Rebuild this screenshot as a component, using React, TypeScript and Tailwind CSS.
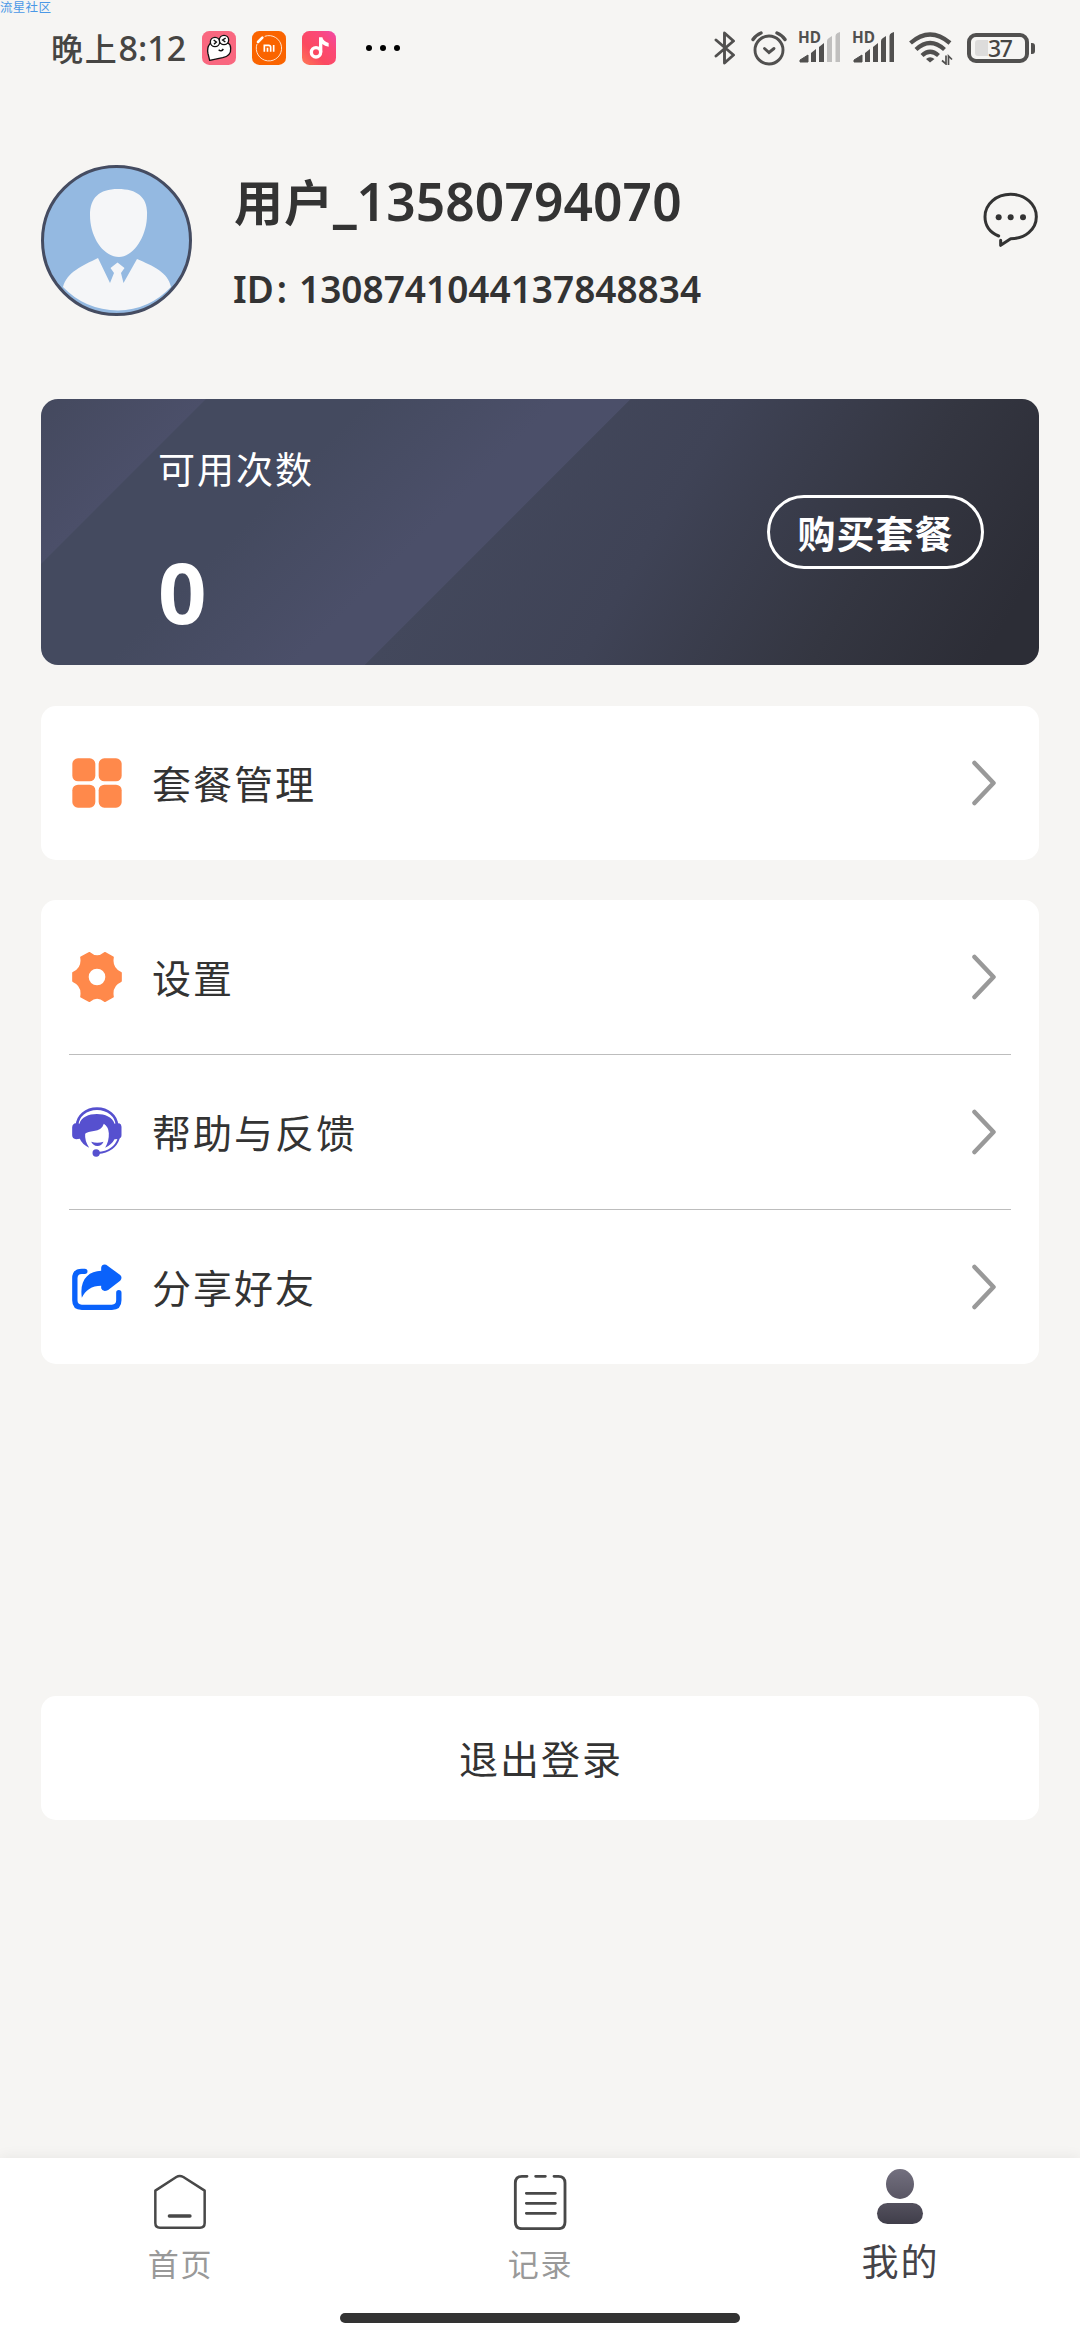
import React from 'react';

const CJK = "font-['Noto_Sans_CJK_SC','Noto_Sans',sans-serif]";
const LATIN = "font-['Noto_Sans','Noto_Sans_CJK_SC',sans-serif]";

function Signal({ dimmed }: { dimmed: boolean }) {
  const faded = dimmed ? '#c0bfbe' : '#51504f';
  return (
    <svg className="h-[34px] w-[42px] shrink-0 overflow-visible" viewBox="0 0 42 34">
      <text x="-1" y="12.4" fontSize="15.5" fontWeight="700" fill="#51504f" fontFamily="Noto Sans" textLength="23" lengthAdjust="spacingAndGlyphs">HD</text>
      <g fill="#51504f">
        <path d="M1 31 V29 L9 24 V31 Z" stroke="#51504f" strokeWidth="1" strokeLinejoin="round" />
        <path d="M12 31 V22 L17 18 V31 Z" />
        <path d="M20 31 V16 L25 12 V31 Z" />
      </g>
      <path d="M28 31 V10 Q28 8 30 7 L33 5 V31 Z" fill={faded} />
      <path d="M36.500 31 V5 Q36.500 3 38.500 2 L41 1 V31 Z" fill={faded} />
    </svg>
  );
}

function StatusBar() {
  return (
    <div className="flex h-[96px] shrink-0 items-center pl-[51px] pr-[45px] text-[#464543]">
      <div className="flex w-[151px] items-center whitespace-nowrap font-medium">
        <span className={`${CJK} pb-[2px] text-[32px] leading-[48px] tracking-[1.8px]`}>晚上</span>
        <span className={`${LATIN} text-[34px] leading-[48px]`}>8:12</span>
      </div>
      <svg className="h-[34px] w-[34px]" viewBox="0 0 102 102">
        <rect width="102" height="102" rx="22" fill="#f9677f" />
        <path d="M24 38 Q14 50 18 68 L23 88 L62 80 Q88 74 86 52 Q86 40 78 36 Z" fill="#fff" stroke="#111" strokeWidth="4" strokeLinejoin="round" />
        <circle cx="39" cy="33" r="14" fill="#fff" stroke="#111" strokeWidth="4" />
        <circle cx="66" cy="27" r="14" fill="#fff" stroke="#111" strokeWidth="4" />
        <path d="M35 27 L43 33 L36 40 M71 21 L62 27 L70 33 M50 56 Q58 64 64 54" fill="none" stroke="#111" strokeWidth="4.500" />
      </svg>
      <svg className="ml-4 h-[34px] w-[34px]" viewBox="0 0 102 102">
        <rect width="102" height="102" rx="22" fill="#fa6400" />
        <path d="M38 16 A38 38 0 1 1 15 39" fill="none" stroke="#ffe3cf" strokeWidth="3" />
        <path d="M18 33 L31 20" stroke="#fff" strokeWidth="8" strokeLinecap="round" />
        <path d="M37 62 V43 H50 Q56 43 56 49 V62 M46.500 50 V62 M65 42 V62" fill="none" stroke="#fff" strokeWidth="5" />
      </svg>
      <svg className="ml-4 h-[34px] w-[34px]" viewBox="0 0 102 102">
        <defs>
          <linearGradient id="music" x1="0" y1="1" x2="1" y2="0">
            <stop offset="0" stopColor="#ff7a55" />
            <stop offset=".35" stopColor="#fb4a60" />
            <stop offset=".7" stopColor="#fb4878" />
            <stop offset="1" stopColor="#f048a8" />
          </linearGradient>
        </defs>
        <rect width="102" height="102" rx="22" fill="url(#music)" />
        <circle cx="42" cy="64" r="14" fill="none" stroke="#fff" strokeWidth="10" />
        <path d="M51 64 V19 H61 Q64 32 80 36 V47 Q68 46 61 39 V64 Z" fill="#fff" />
      </svg>
      <div className="ml-[30px] flex gap-2">
        <span className="size-[6px] rounded-full bg-black" />
        <span className="size-[6px] rounded-full bg-black" />
        <span className="size-[6px] rounded-full bg-black" />
      </div>
      <div className="ml-auto flex items-center">
        <svg className="h-[34px] w-[22px]" viewBox="0 0 22 34" fill="none" stroke="#51504f" strokeWidth="2.900" strokeLinejoin="round" strokeLinecap="round">
          <path d="M2 9 L19.500 24 L10.500 32 V2 L19.500 10 L2 25" />
        </svg>
        <svg className="ml-[15px] h-[36px] w-[36px]" viewBox="0 0 36 36" fill="none" stroke="#51504f" strokeWidth="2.900" strokeLinecap="round">
          <circle cx="18" cy="20" r="14" />
          <path d="M13.500 18.500 L18 22.500 L23 18.500" />
          <path d="M2 9.500 Q5 5 10 3 M34 9.500 Q31 5 26 3" strokeWidth="3.400" />
        </svg>
        <div className="ml-[12px] flex gap-[12px]">
          <Signal dimmed />
          <Signal dimmed={false} />
        </div>
        <svg className="ml-[14px] h-[34px] w-[44px]" viewBox="0 0 44 34" fill="none" stroke="#51504f" strokeWidth="4.300">
          <path d="M1.500 12 Q21 -5 41 12" />
          <path d="M7 18.500 Q21 5.500 35.500 18.500" />
          <path d="M13 24.500 Q21 17 29.500 24.500" />
          <path d="M17 28 Q21 24.500 25.500 28 L21 31.500 Z" fill="#51504f" stroke="none" />
          <path d="M37 24.500 V33 L33 29.500 M39.500 34 V25 L43 28.500" strokeWidth="1.700" />
        </svg>
        <div className="ml-[14px] flex items-center gap-[2px]">
          <div className="flex h-[30px] w-[62px] items-center rounded-[9px] border-4 border-[#51504f] pl-[4px]">
            <span className="h-[16px] w-[13px] rounded-l-[3px] bg-[#dddcdb]" />
            <span className={`${LATIN} text-[23px] font-medium leading-none tracking-[-1.5px]`}>37</span>
          </div>
          <span className="h-[11px] w-[4px] rounded-r-[3px] bg-[#51504f]" />
        </div>
      </div>
    </div>
  );
}

function Avatar() {
  return (
    <svg className="size-[151px] shrink-0" viewBox="0 0 151 151">
      <circle cx="75.500" cy="75.500" r="74" fill="#94b9e1" stroke="#454c61" strokeWidth="3" />
      <path d="M77 24 C97 24 107 33 106 50 C106 72 92 92 78 92 C63 92 49 73 49 50 C49 33 58 24 77 24 Z" fill="#f5f6f8" />
      <path d="M57 93 L69 118 L73 108 L69.500 103 L76.500 97.500 L83.500 103 L80 108 L82.500 118 L96 94 C112 101 127 107 130 122 Q108 145 77 145.500 Q44 145 22 122 C26 107 41 101 57 93 Z" fill="#f5f6f8" />
    </svg>
  );
}

function Chevron() {
  return (
    <svg className="ml-auto mr-[42px] h-[46px] w-[26px]" viewBox="0 0 26 46" fill="none" stroke="#999" strokeWidth="4.500" strokeLinecap="round" strokeLinejoin="round">
      <path d="M3.500 3 L22.500 23 L3.500 43" />
    </svg>
  );
}

function GridIcon() {
  return (
    <svg className="size-[50px]" viewBox="0 0 150 150" fill="#ff894b">
      <rect x="1" y="1" width="69" height="69" rx="17" />
      <rect x="80" y="1" width="69" height="69" rx="17" />
      <rect x="1" y="80" width="69" height="69" rx="17" />
      <rect x="80" y="80" width="69" height="69" rx="17" />
    </svg>
  );
}

function GearIcon() {
  return (
    <svg className="size-[50px]" viewBox="94.500 758 150 150">
      <path
        d="M147 761 Q169.500 781 193 761 L217 774 Q211 808 241 821 V845 Q211 858 217 892 L193 905 Q169.500 885 147 905 L122 892 Q128 858 98 845 V821 Q128 808 122 774 Z"
        fill="#ff894b" stroke="#ff894b" strokeWidth="6" strokeLinejoin="round"
      />
      <circle cx="169.500" cy="833" r="25" fill="#fff" />
    </svg>
  );
}

function SupportIcon() {
  return (
    <svg className="size-[50px]" viewBox="94.500 83 150 150">
      <path d="M110 138 A59.500 50 0 0 1 229 138" fill="none" stroke="#5650cf" strokeWidth="8" />
      <path d="M117 133 C126 94 212 94 222 133 L236 132 Q243 134 243 142 V168 Q243 178 232 179 L222 180 Q214 196 194 205 Q206 186 205 162 Q204 142 190 133 Q184 152 160 155 Q142 157 134 163 Q132 184 146 205 Q124 194 118 178 L107 180 Q95 178 95 168 V144 Q96 133 106 132 Z" fill="#5650cf" />
      <path d="M152 187 Q170 193 189 187 Q182 201 170 200 Q158 199 152 187 Z" fill="#5650cf" />
      <path d="M235 176 Q222 217 172 221" fill="none" stroke="#5650cf" strokeWidth="6" />
      <circle cx="167" cy="221" r="11" fill="#5650cf" />
    </svg>
  );
}

function ShareIcon() {
  return (
    <svg className="size-[50px]" viewBox="94.500 549 150 150">
      <path d="M133 577 H124 Q103 577 103 598 V664 Q103 685 124 685 H214 Q235 685 235 664 V641" fill="none" stroke="#0a62fb" strokeWidth="16" strokeLinecap="round" />
      <path d="M124 656 C116 602 144 576 182 575 V566 Q184 554 197 557 L239 588 Q247 596 239 605 L203 633 Q187 641 182 628 V620 C154 620 134 634 124 656 Z" fill="#0a62fb" />
    </svg>
  );
}

function Row({ icon, label }: { icon: React.ReactNode; label: string }) {
  return (
    <div className="flex h-[154px] items-center pl-[30.5px]">
      {icon}
      <span className={`${CJK} ml-[30.5px] pb-[3px] text-[39px] leading-[56px] tracking-[2px] text-[#333]`}>{label}</span>
      <Chevron />
    </div>
  );
}

export default function App() {
  return (
    <div className="relative flex h-[2340px] w-[1080px] flex-col overflow-hidden bg-[#f6f5f3]">
      <span className={`${CJK} absolute left-0 top-0 text-[12.5px] leading-[13px] tracking-[0.3px] text-[#4a98e6]`}>流星社区</span>
      <StatusBar />

      <header className="mt-[69px] flex h-[151px] shrink-0 pl-[41px] pr-[41px]">
        <Avatar />
        <div className="ml-[42px] flex flex-col whitespace-nowrap text-[#333]">
          <div className="-mt-px flex h-[72px] items-baseline font-semibold">
            <span className={`${CJK} text-[49px] font-bold leading-[72px] tracking-[1px]`}>用户</span>
            <span className={`${LATIN} mr-px text-[51px] leading-[72px] [-webkit-text-stroke:2px_#333]`}>_</span>
            <span className={`${LATIN} text-[51.5px] leading-[72px] tracking-[0.1px]`}>13580794070</span>
          </div>
          <div className={`${LATIN} -ml-px mt-[27px] flex text-[37px] font-semibold leading-[52px]`}>
            <span>ID</span>
            <span className="ml-[3px] mr-[12px]">:</span>
            <span>1308741044137848834</span>
          </div>
        </div>
        <svg className="ml-auto mt-[27px] h-[56px] w-[56px]" viewBox="70 66 168 168" fill="none" stroke="#333" strokeWidth="9" strokeLinecap="round" strokeLinejoin="round">
          <path d="M117 198 C91 187 76 166 76 140 C76 103 109 73 153 73 C197 73 230 103 230 140 C230 179 195 206 153 206 L123 226 V211" />
          <g fill="#333" stroke="none">
            <circle cx="117" cy="142" r="9" />
            <circle cx="153" cy="142" r="9" />
            <circle cx="190" cy="142" r="9" />
          </g>
        </svg>
      </header>

      <section className="mx-[41px] mt-[83px] flex h-[266px] shrink-0 items-start rounded-[17px] bg-[linear-gradient(135deg,#44495e_0%,#4b4f69_13%,#444a5f_13.1%,#444a5f_26%,#4b4f69_41%,#4b4f69_46.6%,transparent_46.7%),linear-gradient(120deg,#43485c_42%,#3f4356_60%,#343641_80%,#2c2d36_95%)] text-white">
        <div className="ml-[117px] flex flex-col">
          <span className={`${CJK} mt-[42px] text-[37px] leading-[54px] tracking-[2px]`}>可用次数</span>
          <span className={`${LATIN} mt-[46px] text-[85px] font-bold leading-[100px]`}>0</span>
        </div>
        <button className={`${CJK} ml-auto mr-[55px] mt-[96px] flex h-[74px] w-[217px] items-center justify-center rounded-full border-[3px] border-white pb-px text-[38px] font-bold leading-none tracking-[1px]`}>
          购买套餐
        </button>
      </section>

      <section className="mx-[41px] mt-[41px] shrink-0 rounded-[15px] bg-white">
        <Row icon={<GridIcon />} label="套餐管理" />
      </section>

      <section className="mx-[41px] mt-[40px] shrink-0 rounded-[15px] bg-white">
        <Row icon={<GearIcon />} label="设置" />
        <div className="mx-[28px] h-px bg-[#bdbdbd]" />
        <Row icon={<SupportIcon />} label="帮助与反馈" />
        <div className="mx-[28px] h-px bg-[#bdbdbd]" />
        <Row icon={<ShareIcon />} label="分享好友" />
      </section>

      <button className={`${CJK} mx-[41px] mt-[332px] flex h-[124px] shrink-0 items-center justify-center rounded-[15px] bg-white pb-[2px] pl-[2px] text-[39px] leading-none tracking-[2px] text-[#333]`}>
        退出登录
      </button>

      <nav className="mt-auto grid h-[182px] shrink-0 grid-cols-3 grid-rows-[155px_27px] bg-white shadow-[0_0_14px_rgba(0,0,0,0.07)]">
        <div className="flex flex-col items-center">
          <svg className="mt-[16px] h-[56px] w-[54px]" viewBox="160 102 162 168" fill="none" stroke="#484848" strokeWidth="7.500" strokeLinecap="round" strokeLinejoin="round">
            <path d="M167 152 L230 111 Q240 105 251 111 L315 152 V249 Q315 263 301 263 H181 Q167 263 167 249 Z" />
            <path d="M209 228 H271" strokeWidth="10" />
          </svg>
          <span className={`${CJK} mt-[11px] pl-px text-[31px] leading-[44px] tracking-[1.7px] text-[#999]`}>首页</span>
        </div>
        <div className="flex flex-col items-center">
          <svg className="mt-[16px] h-[56px] w-[54px]" viewBox="1237 102 162 168" fill="none" stroke="#484848" strokeWidth="8.500" strokeLinecap="round">
            <path d="M1279 109 H1264 Q1244 109 1244 129 V246 Q1244 266 1264 266 H1373 Q1393 266 1393 246 V129 Q1393 109 1373 109 H1360" />
            <path d="M1305 109 H1334 M1277 160 H1364 M1277 190 H1364 M1277 220 H1364" />
          </svg>
          <span className={`${CJK} mt-[11px] pl-px text-[31px] leading-[44px] tracking-[1.7px] text-[#999]`}>记录</span>
        </div>
        <div className="flex flex-col items-center">
          <div className="mt-[11px] h-[30px] w-[28px] rounded-[50%] bg-linear-to-b from-[#73707f] to-[#595664]" />
          <div className="mt-[4px] h-[21px] w-[46px] rounded-full bg-linear-to-b from-[#54515e] to-[#403e4a]" />
          <span className={`${CJK} mt-[9px] pl-px text-[37px] leading-[54px] tracking-[2px] text-[#454348]`}>我的</span>
        </div>
        <div className="col-span-3 mx-auto h-[10px] w-[400px] rounded-full bg-[#333]" />
      </nav>
    </div>
  );
}
